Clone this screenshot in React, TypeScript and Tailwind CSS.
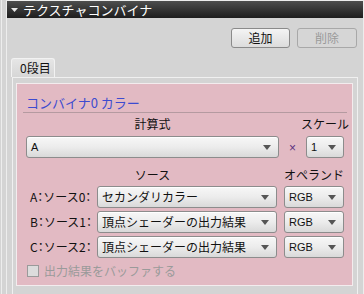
const JP = "font-['Meiryo','Noto_Sans_CJK_JP',sans-serif]";

function Arrow() {
  return (
    <svg width="8" height="5" viewBox="0 0 8 5" className="shrink-0">
      <path d="M0 0 H8 L4 5 Z" fill="#555" />
    </svg>
  );
}

function Select({ value, width, latin }: { value: string; width: string; latin?: boolean }) {
  return (
    <div
      className={`${width} h-[22px] shrink-0 flex items-center justify-between pl-[4px] pr-[7px] rounded-[3px] border border-[#8c8c8c] bg-gradient-to-b from-[#f7f7f7] via-[#ececec] to-[#d9d9d9] shadow-[inset_0_1px_0_#fff]`}
    >
      <span
        className={`${latin ? "font-['Liberation_Sans',sans-serif] text-[11px]" : "text-[12px]"} text-[#111] leading-none whitespace-nowrap`}
      >
        {value}
      </span>
      <Arrow />
    </div>
  );
}

const ROWS = [
  { label: "A：ソース0：", value: "セカンダリカラー" },
  { label: "B：ソース1：", value: "頂点シェーダーの出力結果" },
  { label: "C：ソース2：", value: "頂点シェーダーの出力結果" },
];

export default function App() {
  return (
    <div className={`w-[364px] h-[294px] overflow-hidden bg-[#d4d4d4] flex ${JP}`}>
      <div className="w-[6px] shrink-0 flex">
        <div className="w-[1px]" />
        <div className="w-[1px] bg-[#ededed]" />
      </div>
      <div className="flex-1 flex flex-col border-l border-r border-t border-[#ededed]">
        <div className="h-[17px] flex items-center gap-[5px] pl-[4px] bg-gradient-to-b from-[#4e4e4e] to-[#1e1e1e]">
          <svg width="7" height="4" viewBox="0 0 7 4">
            <path d="M0 0 H7 L3.5 4 Z" fill="#e8e8e8" />
          </svg>
          <span className="text-[13px] leading-none text-white">テクスチャコンバイナ</span>
        </div>

        <div className="mt-[10px] flex justify-end gap-[7px] pr-[6px]">
          <button className="w-[59px] h-[20px] rounded-[3px] border border-[#8a8a8a] bg-gradient-to-b from-[#f4f4f4] to-[#dcdcdc] text-[12px] leading-none text-[#111]">
            追加
          </button>
          <button className="w-[60px] h-[20px] rounded-[3px] border border-[#a8a8a8] bg-[#d6d6d6] text-[12px] leading-none text-[#9a9a9a]">
            削除
          </button>
        </div>

        <div className="mt-[10px] ml-[4px] w-[44px] h-[19px] flex items-center pl-[8px] rounded-t-[3px] border-t border-l border-r border-[#f2f2f2] bg-gradient-to-b from-[#e6e6e6] to-[#d6d6d6]">
          <span className="text-[12px] leading-none text-[#111]">0段目</span>
        </div>

        <div className="flex-1 ml-[5px] mr-[5px] border-l border-r border-t border-[#f0f0f0] pl-[3px] pr-[4px] pt-[5px]">
          <div className="h-[203px] border border-[#f3ecee] bg-[#e2bac3] pl-[9px] pr-[8px] pt-[10px]">
            <div className="h-[16px] flex items-center text-[13px] leading-none text-[#3d4bd0] whitespace-nowrap">
              コンバイナ0 カラー
            </div>
            <div className="mt-[2px] -ml-[3px] -mr-[3px] h-[1px] bg-[#b49aa0]" />

            <div className="mt-[4px] h-[14px] flex items-center text-[12px] leading-none text-[#111]">
              <div className="w-[253px] text-center">計算式</div>
              <div className="w-[27px]" />
              <div className="w-[38px] flex justify-center whitespace-nowrap">スケール</div>
            </div>

            <div className="mt-[5px] flex items-center">
              <Select value="A" width="w-[253px]" latin />
              <div className="w-[27px] pt-[2px] text-center font-['Liberation_Sans',sans-serif] text-[12px] leading-none text-[#5a3080]">
                ×
              </div>
              <Select value="1" width="w-[38px]" latin />
            </div>

            <div className="mt-[10px] h-[14px] flex items-center text-[12px] leading-none text-[#111]">
              <div className="w-[253px] text-center">ソース</div>
              <div className="w-[5px]" />
              <div className="w-[60px] flex justify-center whitespace-nowrap">オペランド</div>
            </div>

            <div className="mt-[4px] flex flex-col gap-[3px]">
              {ROWS.map((r) => (
                <div key={r.label} className="flex items-center">
                  <div className="w-[71px] pl-[4px] text-[12px] leading-none text-[#111] whitespace-nowrap [font-feature-settings:'halt']">
                    {r.label}
                  </div>
                  <Select value={r.value} width="w-[180px]" />
                  <div className="w-[7px]" />
                  <Select value="RGB" width="w-[60px]" latin />
                </div>
              ))}
            </div>

            <div className="mt-[6px] h-[13px] flex items-center gap-[5px] pl-[1px]">
              <div className="w-[12px] h-[12px] border border-[#9a9a9a] bg-[#dcdcdc]" />
              <span className="text-[12px] leading-none text-[#9a9a9a]">出力結果をバッファする</span>
            </div>
          </div>
        </div>
      </div>
    </div>
  );
}
